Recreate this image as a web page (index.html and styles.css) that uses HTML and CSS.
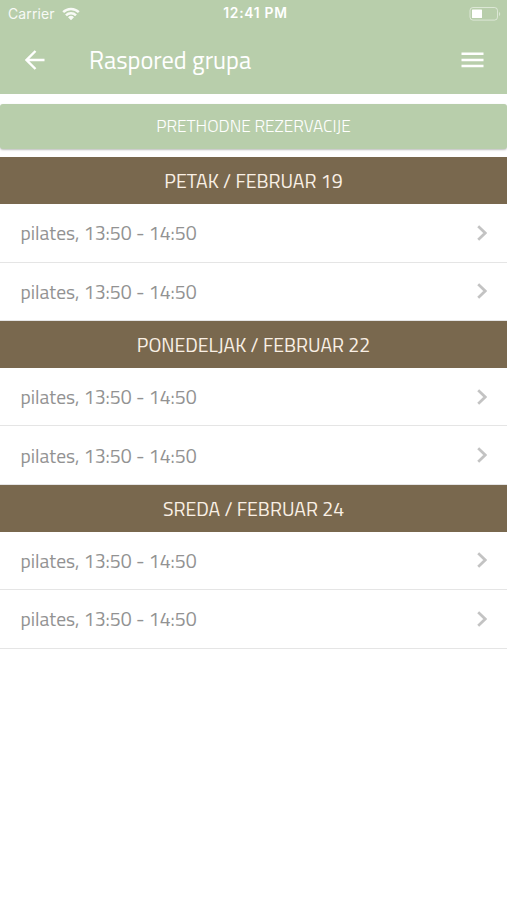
FILE: index.html
```html
<!DOCTYPE html>
<html lang="sr">
<head>
<meta charset="utf-8">
<title>Raspored grupa</title>
<link rel="stylesheet" href="styles.css">
</head>
<body>
<header class="top">
  <div class="status">
    <div class="carrier"><span>Carrier</span>
      <svg width="18" height="14" viewBox="0 0 18 14"><g fill="none" stroke="#fff" stroke-width="2.5"><path d="M1.2 5.2a11 11 0 0 1 15.6 0"/><path d="M4 8.4a7 7 0 0 1 10 0"/></g><path d="M9 13.2 6 10.3a4.3 4.3 0 0 1 6 0z" fill="#fff"/></svg>
    </div>
    <div class="clock">12:41 PM</div>
    <svg class="battery" width="32" height="14" viewBox="0 0 32 14"><rect x="1" y=".5" width="27.5" height="12.6" rx="3" fill="none" stroke="#fff" stroke-opacity=".5"/><rect x="3" y="2.5" width="10" height="8.5" rx=".6" fill="#fff"/><path d="M30.2 5v4c1.3-.6 1.3-3.400 0-4z" fill="#fff" fill-opacity=".6"/></svg>
  </div>
  <nav class="bar">
    <svg class="back" width="20" height="20" viewBox="0 0 20 20"><path d="M19.500 10H2M10.500 1 1.500 10l9 9" fill="none" stroke="#fff" stroke-width="2.400"/></svg>
    <h1>Raspored grupa</h1>
    <svg width="23" height="16" viewBox="0 0 23 16"><path d="M.5 1.700h22M.5 7.900h22M.5 14.100h22" stroke="#fff" stroke-width="2.500"/></svg>
  </nav>
</header>
<main>
  <button class="previous">PRETHODNE REZERVACIJE</button>
  <section>
    <h2>PETAK / FEBRUAR 19</h2>
    <div class="row"><span>pilates, 13:50 - 14:50</span><svg class="chevron" viewBox="0 0 10 16"><path d="m1.200 1.200 7 6.800-7 6.800"/></svg></div>
    <div class="row"><span>pilates, 13:50 - 14:50</span><svg class="chevron" viewBox="0 0 10 16"><path d="m1.200 1.200 7 6.800-7 6.800"/></svg></div>
  </section>
  <section>
    <h2>PONEDELJAK / FEBRUAR 22</h2>
    <div class="row"><span>pilates, 13:50 - 14:50</span><svg class="chevron" viewBox="0 0 10 16"><path d="m1.200 1.200 7 6.800-7 6.800"/></svg></div>
    <div class="row"><span>pilates, 13:50 - 14:50</span><svg class="chevron" viewBox="0 0 10 16"><path d="m1.200 1.200 7 6.800-7 6.800"/></svg></div>
  </section>
  <section>
    <h2>SREDA / FEBRUAR 24</h2>
    <div class="row"><span>pilates, 13:50 - 14:50</span><svg class="chevron" viewBox="0 0 10 16"><path d="m1.200 1.200 7 6.800-7 6.800"/></svg></div>
    <div class="row"><span>pilates, 13:50 - 14:50</span><svg class="chevron" viewBox="0 0 10 16"><path d="m1.200 1.200 7 6.800-7 6.800"/></svg></div>
  </section>
</main>
</body>
</html>
```
FILE: styles.css
```css
* { box-sizing: border-box; }
body { margin: 0; background: #fff; font-family: "Titillium Web", Roboto, sans-serif; }
.top { height: 94px; background: #b8ceab; color: #fff; }
.status { height: 27px; display: grid; grid-template-columns: 1fr auto 1fr; align-items: center; padding: 0 6px 0 8px; font: 14px/26px Inter, sans-serif; }
.carrier { display: flex; align-items: center; gap: 7px; opacity: .9; letter-spacing: .1px; }
.clock { font-weight: 600; font-size: 13.800px; letter-spacing: .75px; padding: 0 0 1px 2px; }
.battery { justify-self: end; }
.bar { height: 66px; display: flex; align-items: center; padding: 0 23px 0 25px; }
h1 { flex: 1; margin: 0 0 0 44px; font-size: 24.400px; line-height: 30px; font-weight: 400; }
.previous { display: block; width: 100%; height: 45px; margin: 9.500px 0 8.800px; padding: 0; border: 0; border-radius: 3px; background: #b8ceab; color: #fff; font: 300 17.200px/45px "Titillium Web", Roboto, sans-serif; box-shadow: 0 1px 2px #0004; }
h2 { height: 46.800px; margin: 0; background: #79684e; color: #faf0e5; font-size: 19.500px; line-height: 48px; font-weight: 400; text-align: center; }
.row { height: 58.500px; display: flex; align-items: center; justify-content: space-between; padding: 1px 20px 0 20.500px; border-bottom: 1.500px solid #e5e5e5; color: #929292; font-size: 19.500px; }
.chevron { width: 10px; height: 16px; margin-top: -1px; fill: none; stroke: #c3c3c3; stroke-width: 2.700; }
```
